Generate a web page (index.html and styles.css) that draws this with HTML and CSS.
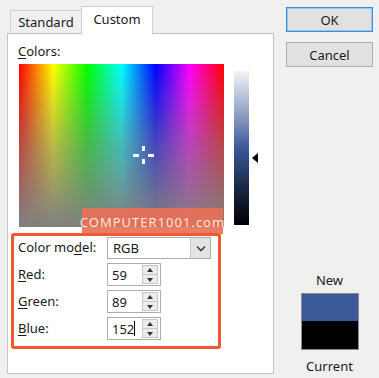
FILE: index.html
```html
<!DOCTYPE html>
<html>
<head>
<meta charset="utf-8">
<link rel="stylesheet" href="styles.css">
</head>
<body>
<div class="dialog">
  <div class="left">
    <div class="tabs">
      <div class="tab">Standard</div>
      <div class="tab active">Custom</div>
    </div>
    <div class="panel">
      <div class="colors-label"><u>C</u>olors:</div>
      <div class="picker-row">
        <div class="spectrum">
          <div class="sat"></div>
          <div class="cross">
            <span class="c-top"></span><span class="c-bottom"></span><span class="c-left"></span><span class="c-right"></span>
          </div>
        </div>
        <div class="lum"></div>
        <div class="arrow"></div>
      </div>
      <div class="watermark">COMPUTER1001.com</div>
      <div class="form">
        <div class="row">
          <div class="label">Color mo<u>d</u>el:</div>
          <div class="combo"><span class="combo-text">RGB</span><span class="combo-btn"><svg width="10" height="7" viewBox="0 0 10 7"><polyline points="1,1.5 5,5.5 9,1.5" fill="none" stroke="#444" stroke-width="1.6"/></svg></span></div>
        </div>
        <div class="row">
          <div class="label"><u>R</u>ed:</div>
          <div class="spin"><span class="spin-text">59</span><span class="spin-btns"><span class="up"></span><span class="down"></span></span></div>
        </div>
        <div class="row">
          <div class="label"><u>G</u>reen:</div>
          <div class="spin"><span class="spin-text">89</span><span class="spin-btns"><span class="up"></span><span class="down"></span></span></div>
        </div>
        <div class="row">
          <div class="label"><u>B</u>lue:</div>
          <div class="spin"><span class="spin-text">152<span class="caret"></span></span><span class="spin-btns"><span class="up"></span><span class="down"></span></span></div>
        </div>
      </div>
    </div>
  </div>
  <div class="right">
    <div class="btn default">OK</div>
    <div class="btn">Cancel</div>
    <div class="preview">
      <div class="p-label">New</div>
      <div class="swatch"><div class="sw-new"></div><div class="sw-cur"></div></div>
      <div class="p-label">Current</div>
    </div>
  </div>
</div>
</body>
</html>
```
FILE: styles.css
```css
* { box-sizing: border-box; }
html, body { margin: 0; padding: 0; }
body {
  width: 379px;
  height: 378px;
  overflow: hidden;
  background: #f0f0f0;
  font-family: "Noto Sans", "Open Sans", sans-serif;
  font-size: 13px;
  color: #1a1a1a;
}
u { text-decoration-thickness: 1px; text-underline-offset: 2px; }
.dialog { display: flex; }
.left { width: 267px; margin-left: 7px; }
.tabs { display: flex; align-items: flex-end; height: 33px; padding-left: 3px; position: relative; z-index: 2; }
.tab {
  height: 22px;
  width: 72px;
  border: 1px solid #d0d0d0;
  border-bottom: none;
  background: #f0f0f0;
  display: flex;
  align-items: center;
  justify-content: center;
  margin-bottom: 1px;
}
.tab.active {
  height: 28px;
  width: 72px;
  background: #fff;
  margin-left: -1px;
  margin-bottom: -1px;
  padding-bottom: 3px;
}
.panel {
  height: 341px;
  background: #fff;
  border: 1px solid #c4c4c4;
  position: relative;
}
.colors-label { padding: 8px 0 0 10px; line-height: 18px; height: 30px; }
.picker-row { display: flex; align-items: flex-start; padding-left: 11px; }
.spectrum {
  width: 205px;
  height: 163px;
  position: relative;
  background: linear-gradient(to right, #ff0000 0%, #ffff00 16.7%, #00ff00 33.3%, #00ffff 50%, #0000ff 66.7%, #ff00ff 83.3%, #ff0000 100%);
}
.sat {
  position: absolute; inset: 0;
  background: linear-gradient(to bottom, rgba(128,128,128,0) 0%, rgba(128,128,128,0.55) 50%, rgba(128,128,128,1) 100%);
}
.cross { position: absolute; left: 124px; top: 91px; width: 0; height: 0; }
.cross span { position: absolute; background: #fff; }
.c-top { left: -1px; top: -9px; width: 3px; height: 5px; }
.c-bottom { left: -1px; top: 4px; width: 3px; height: 5px; }
.c-left { left: -10px; top: -1px; width: 6px; height: 3px; }
.c-right { left: 5px; top: -1px; width: 6px; height: 3px; }
.lum {
  width: 15px;
  height: 154px;
  margin-left: 10px;
  margin-top: 7px;
  background: linear-gradient(to bottom, #f2f4f8 0%, #9aa9c8 25%, #3b5998 50%, #1c2a48 75%, #000 100%);
}
.arrow {
  width: 0; height: 0;
  margin-left: 3px;
  margin-top: 89px;
  border-top: 5px solid transparent;
  border-bottom: 5px solid transparent;
  border-right: 6px solid #000;
}
.watermark {
  position: absolute;
  left: 74px;
  top: 174px;
  width: 141px;
  height: 26px;
  background: rgba(232, 112, 88, 0.92);
  color: #fde6de;
  font-size: 13px;
  letter-spacing: 1px;
  display: flex;
  align-items: center;
  justify-content: center;
  padding-top: 1px;
}
.form {
  position: relative;
  width: 210px;
  margin-left: 3px;
  margin-top: 6px;
  border: 3px solid #ef5a33;
  border-radius: 3px;
  padding: 1px 0 6px 4px;
  display: flex;
  flex-direction: column;
  gap: 4px;
}
.row { display: flex; align-items: center; height: 23px; }
.row:first-child { height: 22px; }
.label { width: 89px; margin-top: -2px; }
.combo {
  width: 104px; height: 22px;
  border: 1px solid #abadb3;
  background: #fff;
  display: flex; align-items: center;
}
.combo-text { flex: 1; padding-left: 5px; }
.combo-btn {
  width: 20px; height: 20px;
  background: #e3e3e3;
  border-left: 1px solid #cfcfcf;
  display: flex; align-items: center; justify-content: center;
}
.spin {
  width: 54px; height: 23px;
  border: 1px solid #abadb3;
  background: #fff;
  display: flex; align-items: center;
  padding-right: 2px;
}
.spin-text { flex: 1; padding-left: 4px; display: flex; align-items: center; }
.caret { display: inline-block; width: 1px; height: 15px; background: #000; margin-left: 0; }
.spin-btns {
  width: 16px; height: 19px;
  display: flex; flex-direction: column;
  border: 1px solid #c8c8c8;
  background: #ececec;
}
.spin-btns span { flex: 1; position: relative; }
.spin-btns .up { border-bottom: 1px solid #c8c8c8; }
.spin-btns .up::after, .spin-btns .down::after {
  content: ""; position: absolute; left: 4px; width: 0; height: 0;
  border-left: 3.5px solid transparent; border-right: 3.5px solid transparent;
}
.spin-btns .up::after { top: 2px; border-bottom: 4px solid #333; }
.spin-btns .down::after { top: 3px; border-top: 4px solid #333; }
.right { margin-left: 12px; width: 87px; display: flex; flex-direction: column; padding-top: 7px; }
.btn {
  height: 25px;
  border: 1px solid #adadad;
  background: #e1e1e1;
  display: flex; align-items: center; justify-content: center;
  margin-bottom: 10px;
}
.btn.default { border-color: #3c8ddb; box-shadow: inset 0 0 0 1px #9cc4ea; }
.preview { margin-top: 195px; display: flex; flex-direction: column; align-items: center; }
.p-label { line-height: 16px; }
.swatch {
  width: 58px; height: 57px;
  border: 1px solid #8a8a8a;
  margin: 5px 0 8px;
  display: flex; flex-direction: column;
}
.sw-new { height: 27px; background: #3b5998; }
.sw-cur { flex: 1; background: #000; }
```
